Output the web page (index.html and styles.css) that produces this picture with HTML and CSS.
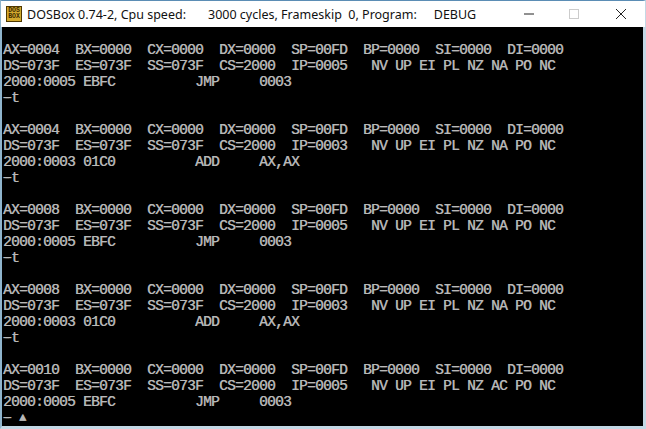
FILE: index.html
```html
<!DOCTYPE html>
<html lang="en">
<head>
<meta charset="utf-8">
<title>DOSBox</title>
<link rel="stylesheet" href="styles.css">
</head>
<body>
<div class="window">
  <header class="titlebar">
    <div class="app-icon"><span>DOS</span><span>BOX</span></div>
    <div class="title"><span>DOSBox 0.74-2, Cpu speed:</span><span class="cycles">3000 cycles, Frameskip  0, Program:</span><span class="program">DEBUG</span></div>
    <div class="controls">
      <svg class="ctl" width="46" height="26" viewBox="0 0 46 26"><path d="M0 13H10" transform="translate(18)" stroke="#222" stroke-width="1"/></svg>
      <svg class="ctl" width="46" height="26" viewBox="0 0 46 26"><rect x="17.5" y="8.5" width="9" height="9" fill="none" stroke="#ccc"/></svg>
      <svg class="ctl" width="46" height="26" viewBox="0 0 46 26"><path d="M18 8L28 18M28 8L18 18" stroke="#222" stroke-width="1" fill="none"/></svg>
    </div>
  </header>
  <pre class="console">
AX=0004  BX=0000  CX=0000  DX=0000  SP=00FD  BP=0000  SI=0000  DI=0000
DS=073F  ES=073F  SS=073F  CS=2000  IP=0005   NV UP EI PL NZ NA PO NC
2000:0005 EBFC          JMP     0003
<span class="prompt">-</span>t

AX=0004  BX=0000  CX=0000  DX=0000  SP=00FD  BP=0000  SI=0000  DI=0000
DS=073F  ES=073F  SS=073F  CS=2000  IP=0003   NV UP EI PL NZ NA PO NC
2000:0003 01C0          ADD     AX,AX
<span class="prompt">-</span>t

AX=0008  BX=0000  CX=0000  DX=0000  SP=00FD  BP=0000  SI=0000  DI=0000
DS=073F  ES=073F  SS=073F  CS=2000  IP=0005   NV UP EI PL NZ NA PO NC
2000:0005 EBFC          JMP     0003
<span class="prompt">-</span>t

AX=0008  BX=0000  CX=0000  DX=0000  SP=00FD  BP=0000  SI=0000  DI=0000
DS=073F  ES=073F  SS=073F  CS=2000  IP=0003   NV UP EI PL NZ NA PO NC
2000:0003 01C0          ADD     AX,AX
<span class="prompt">-</span>t

AX=0010  BX=0000  CX=0000  DX=0000  SP=00FD  BP=0000  SI=0000  DI=0000
DS=073F  ES=073F  SS=073F  CS=2000  IP=0005   NV UP EI PL NZ AC PO NC
2000:0005 EBFC          JMP     0003
<span class="prompt">-</span> <span class="cursor">▲</span></pre>
</div>
</body>
</html>
```

FILE: styles.css
```css
html, body {
  margin: 0;
  padding: 0;
  width: 646px;
  height: 429px;
  overflow: hidden;
  background: #d4e4ee;
}

.window {
  box-sizing: border-box;
  width: 646px;
  height: 429px;
  display: flex;
  flex-direction: column;
  border-top: 1px solid #5b8db5;
  border-left: 2px solid #8fb4cc;
  border-right: 3px solid #c3d8e5;
  border-bottom: 3px solid #c3d8e5;
}

.titlebar {
  flex: 0 0 25px;
  display: flex;
  align-items: center;
  background: #fff;
  margin-left: -1px;
  margin-right: -2px;
  padding-left: 5px;
}

.app-icon {
  box-sizing: border-box;
  width: 16px;
  height: 16px;
  border: 1px solid #4f3800;
  background: #d2a92e;
  color: #3d2a00;
  font: bold 6.5px/6.5px "Liberation Mono", monospace;
  display: flex;
  flex-direction: column;
  align-items: center;
  justify-content: center;
  flex: none;
}

.title {
  margin-left: 5px;
  flex: 1;
  font: 12.5px "Noto Sans", sans-serif;
  white-space: pre;
  color: #111;
}

.cycles {
  margin-left: 22px;
}

.program {
  margin-left: 17px;
}

.controls {
  display: flex;
  flex: none;
  margin-right: 1px;
}

.ctl {
  display: block;
}

.console {
  flex: 1;
  margin: 0;
  padding: 15px 0 0 1px;
  background: #000;
  color: #b8b8b8;
  font: 14.5px/16px "Liberation Mono", monospace;
  letter-spacing: -0.7px;
  text-shadow: 0.4px 0 #999;
  overflow: hidden;
}

.prompt {
  text-shadow: 2px 0 #b8b8b8, -2px 0 #b8b8b8;
}

.cursor {
  display: inline-block;
  font-size: 12px;
  line-height: 10px;
  letter-spacing: 0;
  vertical-align: 1px;
}
```
